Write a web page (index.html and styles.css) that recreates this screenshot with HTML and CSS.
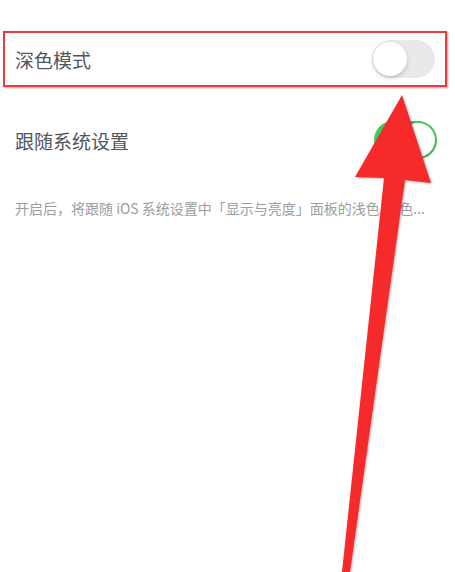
FILE: index.html
```html
<!DOCTYPE html>
<html lang="zh-CN">
<head>
<meta charset="utf-8">
<title>深色模式</title>
<link rel="stylesheet" href="styles.css">
</head>
<body>
<div class="page">
  <div class="row highlight">
    <span class="label">深色模式</span>
    <span class="switch off"><span class="knob"></span></span>
  </div>
  <div class="row plain">
    <span class="label">跟随系统设置</span>
    <span class="switch on"><span class="knob"></span></span>
  </div>
  <p class="desc">开启后，将跟随 iOS 系统设置中「显示与亮度」面板的浅色/深色...</p>
  <svg class="arrow" width="455" height="572" viewBox="0 0 455 572" xmlns="http://www.w3.org/2000/svg">
    <polygon points="402,95 431,183 405,180 350,572 342,572 384,178 355,177" fill="#f62a2a"/>
  </svg>
</div>
</body>
</html>
```
FILE: styles.css
```css
html, body {
  margin: 0;
  padding: 0;
  background: #ffffff;
}
body {
  width: 455px;
  height: 572px;
  overflow: hidden;
  font-family: "Noto Sans CJK SC", "Noto Sans", sans-serif;
}
.page {
  position: relative;
  width: 455px;
  height: 572px;
  padding-top: 31px;
  box-sizing: border-box;
}
.row {
  display: flex;
  align-items: center;
  justify-content: space-between;
  box-sizing: border-box;
}
.highlight {
  height: 56px;
  margin: 0 8px 0 3px;
  padding: 0 10px 0 10px;
  border: 2px solid #ea3b40;
  box-shadow: 1px 1px 2px rgba(0, 0, 0, 0.35);
}
.plain {
  height: 56px;
  margin-top: 25px;
  padding: 0 18px 0 15px;
}
.label {
  font-size: 19px;
  color: #51565c;
  line-height: 1;
}
.switch {
  position: relative;
  width: 63px;
  height: 38px;
  border-radius: 19px;
  box-sizing: border-box;
}
.switch.off {
  background: #e9e9eb;
}
.switch.on {
  background: #43c85c;
}
.knob {
  position: absolute;
  top: 2px;
  width: 34px;
  height: 34px;
  border-radius: 50%;
  background: #ffffff;
  box-shadow: 0 2px 4px rgba(0, 0, 0, 0.18);
}
.switch.off .knob {
  left: 1px;
}
.switch.on .knob {
  right: 2px;
}
.desc {
  margin: 30px 0 0 15px;
  font-size: 14px;
  line-height: 20px;
  color: #9a9da1;
  white-space: nowrap;
}
.arrow {
  position: absolute;
  left: 0;
  top: 0;
  filter: drop-shadow(1px 1px 1px rgba(0, 0, 0, 0.3));
}
```
